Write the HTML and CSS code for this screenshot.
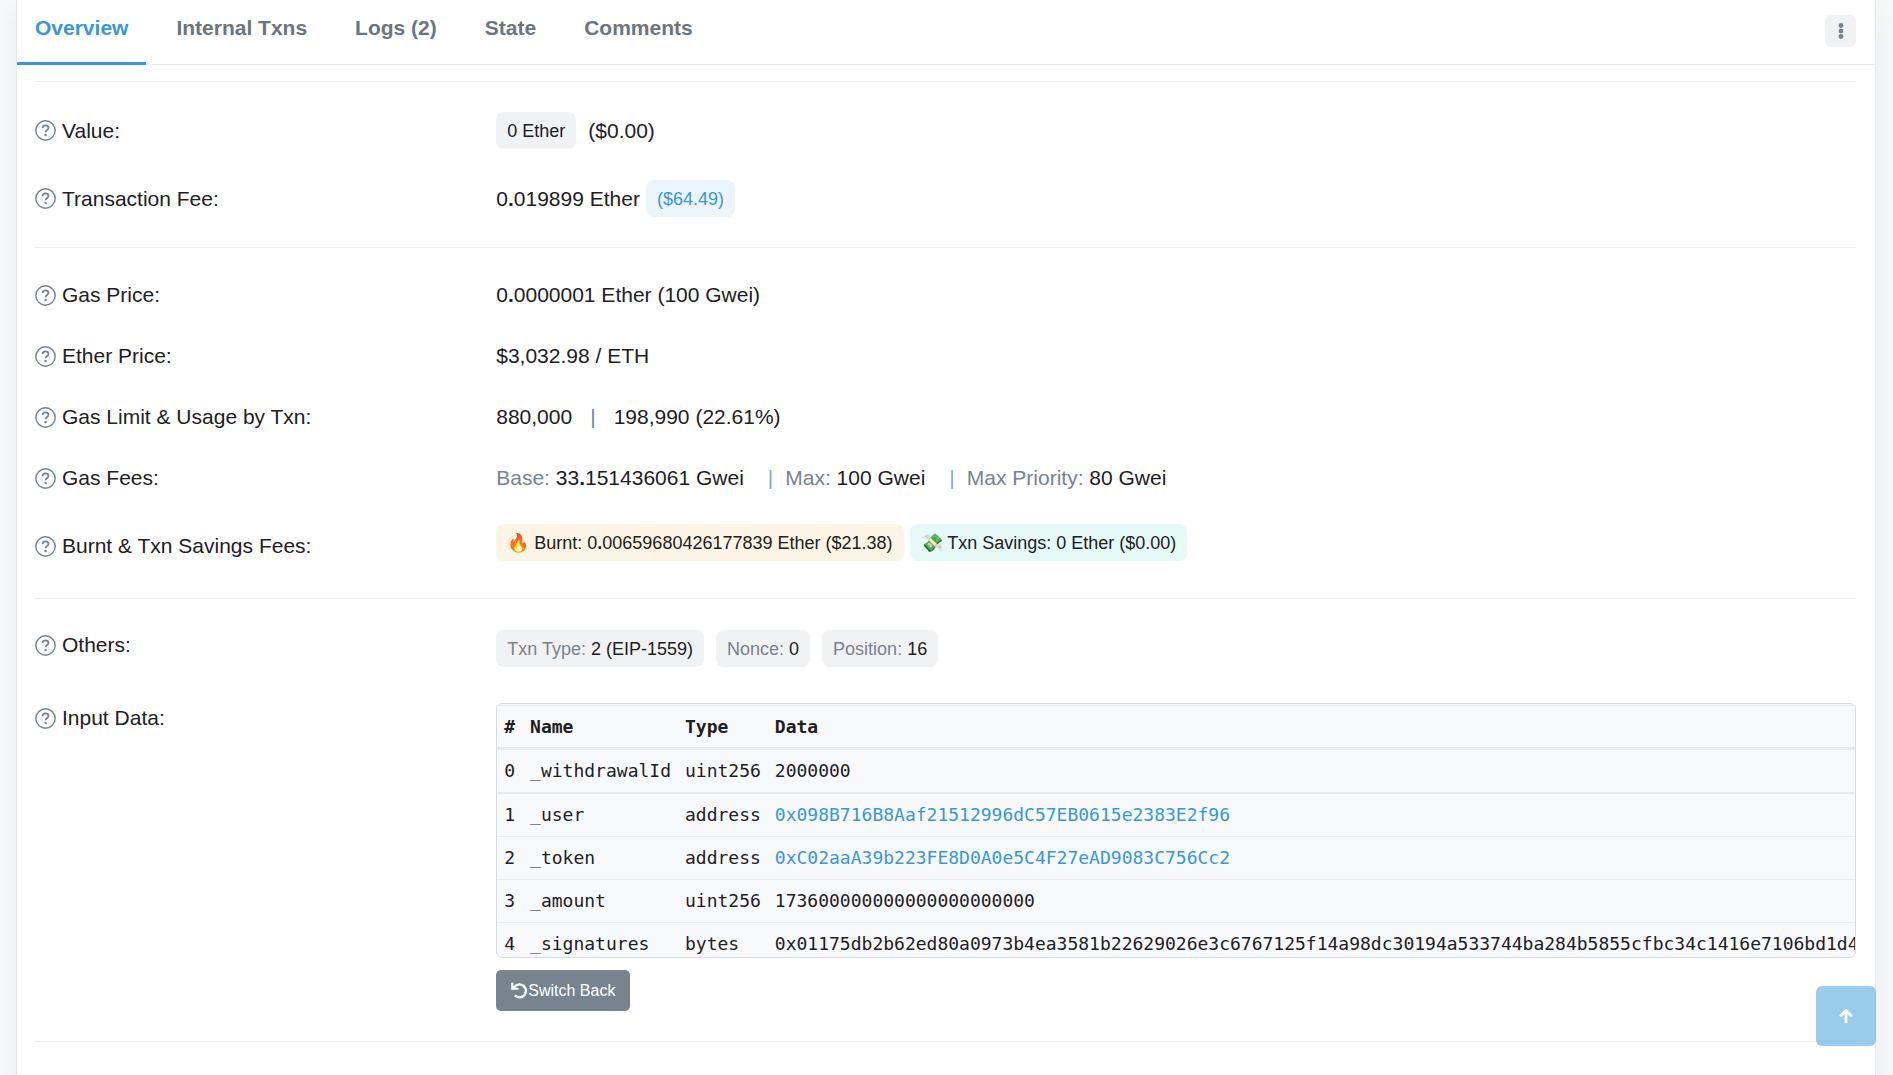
FILE: index.html
```html
<!DOCTYPE html>
<html lang="en">
<head>
<meta charset="utf-8">
<meta name="viewport" content="width=device-width, initial-scale=1">
<title>Transaction Details</title>
<link rel="stylesheet" href="styles.css">
</head>
<body>
<svg class="sprite" aria-hidden="true">
  <symbol id="help" viewBox="0 0 20 20">
    <circle cx="10" cy="10" r="9.2" fill="none" stroke="currentColor" stroke-width="1.4"/>
    <path d="M7.2 7.7C7.3 6 8.5 5.1 10 5.1c1.6 0 2.8 1 2.8 2.4 0 2-2.7 2.1-2.7 4.1" fill="none" stroke="currentColor" stroke-width="1.7"/>
    <circle cx="10.1" cy="14.2" r="1.2" fill="currentColor"/>
  </symbol>
</svg>
<main class="card">
  <header class="card-header">
    <nav class="tabs">
      <a class="tab active" href="#overview">Overview</a>
      <a class="tab" href="#internal">Internal Txns</a>
      <a class="tab" href="#logs">Logs (2)</a>
      <a class="tab" href="#state">State</a>
      <a class="tab" href="#comments">Comments</a>
    </nav>
    <button class="menu-button" type="button" aria-label="More options">
      <svg width="6" height="18" viewBox="0 0 6 18" fill="currentColor"><circle cx="3" cy="3.5" r="2.4"/><circle cx="3" cy="9" r="2.4"/><circle cx="3" cy="14.5" r="2.4"/></svg>
    </button>
  </header>
  <div class="card-body" id="overview">
    <section class="group">
      <div class="row">
        <div class="label"><svg class="help"><use href="#help"/></svg>Value:</div>
        <div class="value"><span class="tag tag-gray">0 Ether</span><span class="after-tag">($0.00)</span></div>
      </div>
      <div class="row">
        <div class="label"><svg class="help"><use href="#help"/></svg>Transaction Fee:</div>
        <div class="value"><span>0<b>.</b>019899 Ether</span><span class="tag tag-blue">($64.49)</span></div>
      </div>
    </section>
    <section class="group group-gas">
      <div class="row">
        <div class="label"><svg class="help"><use href="#help"/></svg>Gas Price:</div>
        <div class="value"><span>0<b>.</b>0000001 Ether (100 Gwei)</span></div>
      </div>
      <div class="row">
        <div class="label"><svg class="help"><use href="#help"/></svg>Ether Price:</div>
        <div class="value">$3,032.98 / ETH</div>
      </div>
      <div class="row">
        <div class="label"><svg class="help"><use href="#help"/></svg>Gas Limit &amp; Usage by Txn:</div>
        <div class="value usage"><span>880,000</span><span class="muted">|</span><span>198,990 (22.61%)</span></div>
      </div>
      <div class="row">
        <div class="label"><svg class="help"><use href="#help"/></svg>Gas Fees:</div>
        <div class="value fees">
          <span><span class="muted">Base:</span> 33<b>.</b>151436061 Gwei</span>
          <span class="fee"><span class="bar">|</span><span><span class="muted">Max:</span> 100 Gwei</span></span>
          <span class="fee"><span class="bar">|</span><span><span class="muted">Max Priority:</span> 80 Gwei</span></span>
        </div>
      </div>
      <div class="row row-end">
        <div class="label"><svg class="help"><use href="#help"/></svg>Burnt &amp; Txn Savings Fees:</div>
        <div class="value"><span class="tag tag-orange">🔥 Burnt: 0<b>.</b>00659680426177839 Ether ($21.38)</span><span class="tag tag-teal">💸 Txn Savings: 0 Ether ($0.00)</span></div>
      </div>
    </section>
    <section class="group group-data">
      <div class="row row-start">
        <div class="label"><svg class="help"><use href="#help"/></svg>Others:</div>
        <div class="value others">
          <span class="tag tag-gray"><span class="muted">Txn Type:</span> 2 (EIP-1559)</span>
          <span class="tag tag-gray"><span class="muted">Nonce:</span> 0</span>
          <span class="tag tag-gray"><span class="muted">Position:</span> 16</span>
        </div>
      </div>
      <div class="row row-start">
        <div class="label"><svg class="help"><use href="#help"/></svg>Input Data:</div>
        <div class="input-data">
          <div class="data-box">
            <table class="data-table">
              <thead><tr><th>#</th><th>Name</th><th>Type</th><th>Data</th></tr></thead>
              <tbody>
                <tr><td>0</td><td>_withdrawalId</td><td>uint256</td><td>2000000</td></tr>
                <tr><td>1</td><td>_user</td><td>address</td><td><a href="#user">0x098B716B8Aaf21512996dC57EB0615e2383E2f96</a></td></tr>
                <tr><td>2</td><td>_token</td><td>address</td><td><a href="#token">0xC02aaA39b223FE8D0A0e5C4F27eAD9083C756Cc2</a></td></tr>
                <tr><td>3</td><td>_amount</td><td>uint256</td><td>173600000000000000000000</td></tr>
                <tr><td>4</td><td>_signatures</td><td>bytes</td><td>0x01175db2b62ed80a0973b4ea3581b22629026e3c6767125f14a98dc30194a533744ba284b5855cfbc34c1416e7106bd1d4</td></tr>
              </tbody>
            </table>
          </div>
          <button class="switch-button" type="button"><svg width="17" height="17" viewBox="0 0 16 16" fill="none" stroke="currentColor"><path d="M2.8 5.2A6.1 6.1 0 1 1 3.6 12.6" stroke-width="2.2"/><path d="M1.2 .6V6.4H7" stroke-width="2"/><path d="M1.2 6.4V2.6L5 6.4Z" fill="currentColor" stroke="none"/></svg>Switch Back</button>
        </div>
      </div>
    </section>
  </div>
</main>
<a class="to-top" href="#overview" aria-label="Back to top"><svg width="14" height="16" viewBox="0 0 14 16" fill="none" stroke="currentColor" stroke-width="2.8"><path d="M7 15V2.6M1.2 8.2L7 2.4l5.8 5.8"/></svg></a>
</body>
</html>
```
FILE: styles.css
```css
* { box-sizing: border-box; }

body {
  margin: 0;
  padding: 0 17px 0 16px;
  background: #f8f9fa;
  color: #1e2022;
  font-family: "Liberation Sans", Arial, sans-serif;
  font-size: 21px;
  line-height: 30px;
}

a { color: #3498db; text-decoration: none; }
button { font: inherit; border: 0; cursor: pointer; }

.sprite { display: none; }

.card {
  min-height: 100vh;
  background: #fff;
  border: solid #e7eaf3;
  border-width: 0 1px;
  box-shadow: 0 10px 28px rgba(140, 152, 164, .15);
}

.card-header {
  display: flex;
  align-items: flex-start;
  justify-content: space-between;
  padding-right: 19px;
  border-bottom: 1px solid #e7eaf3;
}

.tabs { display: flex; gap: 12px; margin-bottom: -1px; }

.tab {
  padding: 13px 18px 19px;
  border-bottom: 3px solid transparent;
  color: #6c757e;
  font-weight: 700;
}
.tab.active { color: #3498db; border-color: #3498db; }

.menu-button {
  display: flex;
  align-items: center;
  justify-content: center;
  width: 31px;
  height: 32px;
  margin-top: 15px;
  padding: 0;
  border-radius: 6px;
  background: #f1f2f4;
  color: #77838f;
}

.card-body { padding: 16px 19px 60px 18px; }

.group {
  display: flex;
  flex-direction: column;
  gap: 31px;
  padding: 30px 0;
  border-top: 1px solid #eceef1;
}
.group-gas { padding: 32px 0 37px; }
.group-data { gap: 36px; padding-top: 31px; border-bottom: 1px solid #eceef1; }

.row {
  display: grid;
  grid-template-columns: 1fr 3fr;
  column-gap: 8px;
  align-items: center;
}
.row-start { align-items: start; }
.row-end { align-items: end; }
.row > * { min-width: 0; }

.label { display: flex; align-items: center; gap: 6px; }
.help { width: 21px; height: 21px; color: #77838f; overflow: visible; }

.value { display: flex; flex-wrap: wrap; align-items: center; gap: 6px; }
.after-tag { padding-left: 6px; }
.usage { gap: 18px; }
.fees { gap: 24px; }
.fee { display: flex; gap: 12px; }
.others { gap: 12px; }

.muted { color: #77838f; }
.bar { color: #7fa8c9; }

.tag {
  padding: 4px 11px 3px;
  border-radius: 8px;
  font-size: 18px;
}
.tag-gray { background: #f1f2f4; }
.tag-blue { background: #ebf5fb; color: #3498db; }
.tag-orange { background: #fcf5e5; }
.tag-teal { background: #e5f9f7; }

.input-data {
  display: flex;
  flex-direction: column;
  align-items: flex-start;
  gap: 12px;
}

.data-box {
  width: 100%;
  max-height: 255px;
  padding-top: 1px;
  overflow: hidden;
  border: 1px solid #d5dae2;
  border-radius: 6px;
  background: #f8f9fb;
}

.data-table {
  width: 100%;
  border-spacing: 0;
  font-family: "DejaVu Sans Mono", monospace;
  font-size: 18px;
  line-height: 28px;
  white-space: nowrap;
}
.data-table th,
.data-table td {
  padding: 7px 7px 7px 7px;
  border-top: 1px solid #e7eaf3;
  text-align: left;
}
.data-table th:first-child,
.data-table td:first-child { padding-right: 8px; }
.data-table th:last-child,
.data-table td:last-child { width: 100%; }
.data-table th { padding-bottom: 6px; border-bottom: 2px solid #e7eaf3; }
.data-table tbody tr:first-child td { border-bottom: 1px solid #e7eaf3; }

.switch-button {
  display: flex;
  align-items: center;
  height: 41px;
  padding: 0 15px;
  border-radius: 5px;
  background: #77838f;
  color: #fff;
  font-size: 16px;
}

.to-top {
  position: fixed;
  right: 17px;
  bottom: 29px;
  display: flex;
  align-items: center;
  justify-content: center;
  width: 60px;
  height: 60px;
  border-radius: 6px;
  background: rgba(52, 152, 219, .5);
  color: #fff;
}
```
